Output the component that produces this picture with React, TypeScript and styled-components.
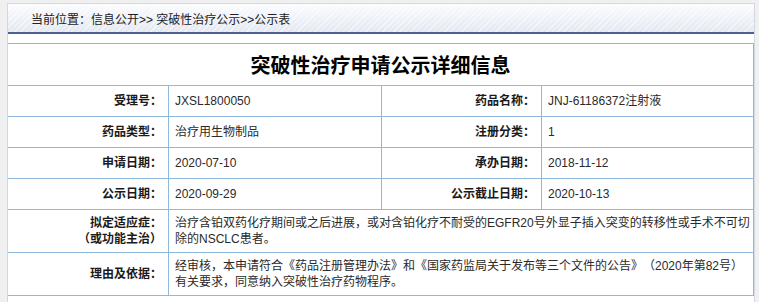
import React from "react";
import styled, { createGlobalStyle } from "styled-components";

const Global = createGlobalStyle`
  html, body { margin: 0; padding: 0; background: #f0f0f0; overflow: hidden; }
  body {
    font-family: "Liberation Sans", "Noto Sans CJK SC", sans-serif;
    text-spacing-trim: space-all;
  }
`;

const Panel = styled.div`
  margin: 3px 0 0 7px;
  width: 748px;
  height: 299px;
  box-sizing: border-box;
  background: #fff;
  border: 1px solid #d2d8e0;
  border-bottom: none;
  overflow: hidden;
`;

const Crumb = styled.div`
  height: 28px;
  border-bottom: 2px solid #4f5f93;
  background:
    repeating-linear-gradient(135deg, rgba(255,255,255,0.55) 0 1px, rgba(255,255,255,0) 1px 4px),
    linear-gradient(#fbfcfe, #e3e8f1);
  display: flex;
  align-items: center;
  padding-left: 23px;
  font-size: 12px;
  color: #222;
`;

const Grid = styled.div`
  margin: 9px 0 0 -1px;
  width: 747px;
  box-sizing: border-box;
  display: grid;
  grid-template-columns: 161px 213px 160px 212px;
  border-left: 1px solid #8fb9df;
  border-top: 1px solid #8fb9df;
`;

const Cell = styled.div<{ $span?: number; $h?: number }>`
  grid-column: span ${(p) => p.$span ?? 1};
  height: ${(p) => p.$h ?? 31}px;
  box-sizing: border-box;
  border-right: 1px solid #8fb9df;
  border-bottom: 1px solid #8fb9df;
  display: flex;
  align-items: center;
  font-size: 12px;
`;

const Title = styled(Cell)`
  justify-content: center;
  font-family: "Noto Sans CJK SC", sans-serif;
  font-weight: bold;
  font-size: 20px;
  color: #000;
`;

const Label = styled(Cell)`
  justify-content: flex-end;
  text-align: right;
  padding-right: 6px;
  font-weight: bold;
  color: #1a1a1a;
  line-height: 16px;
`;

const Value = styled(Cell)`
  padding-left: 6px;
  color: #2a2a2a;
  line-height: 16px;
  white-space: nowrap;
`;

const rows: [string, string, string, string][] = [
  ["受理号：", "JXSL1800050", "药品名称：", "JNJ-61186372注射液"],
  ["药品类型：", "治疗用生物制品", "注册分类：", "1"],
  ["申请日期：", "2020-07-10", "承办日期：", "2018-11-12"],
  ["公示日期：", "2020-09-29", "公示截止日期：", "2020-10-13"],
];

export default function App() {
  return (
    <>
      <Global />
      <Panel>
        <Crumb>当前位置：信息公开&gt;&gt; 突破性治疗公示&gt;&gt;公示表</Crumb>
        <Grid>
          <Title $span={4} $h={42}>突破性治疗申请公示详细信息</Title>
          {rows.map((r) => (
            <React.Fragment key={r[0]}>
              <Label>{r[0]}</Label>
              <Value>{r[1]}</Value>
              <Label>{r[2]}</Label>
              <Value>{r[3]}</Value>
            </React.Fragment>
          ))}
          <Label $h={43}>
            拟定适应症：
            <br />
            （或功能主治）
          </Label>
          <Value $span={3} $h={43}>
            治疗含铂双药化疗期间或之后进展，或对含铂化疗不耐受的EGFR20号外显子插入突变的转移性或手术不可切
            <br />
            除的NSCLC患者。
          </Value>
          <Label $h={43}>理由及依据：</Label>
          <Value $span={3} $h={43}>
            经审核，本申请符合《药品注册管理办法》和《国家药监局关于发布等三个文件的公告》（2020年第82号）
            <br />
            有关要求，同意纳入突破性治疗药物程序。
          </Value>
        </Grid>
      </Panel>
    </>
  );
}
